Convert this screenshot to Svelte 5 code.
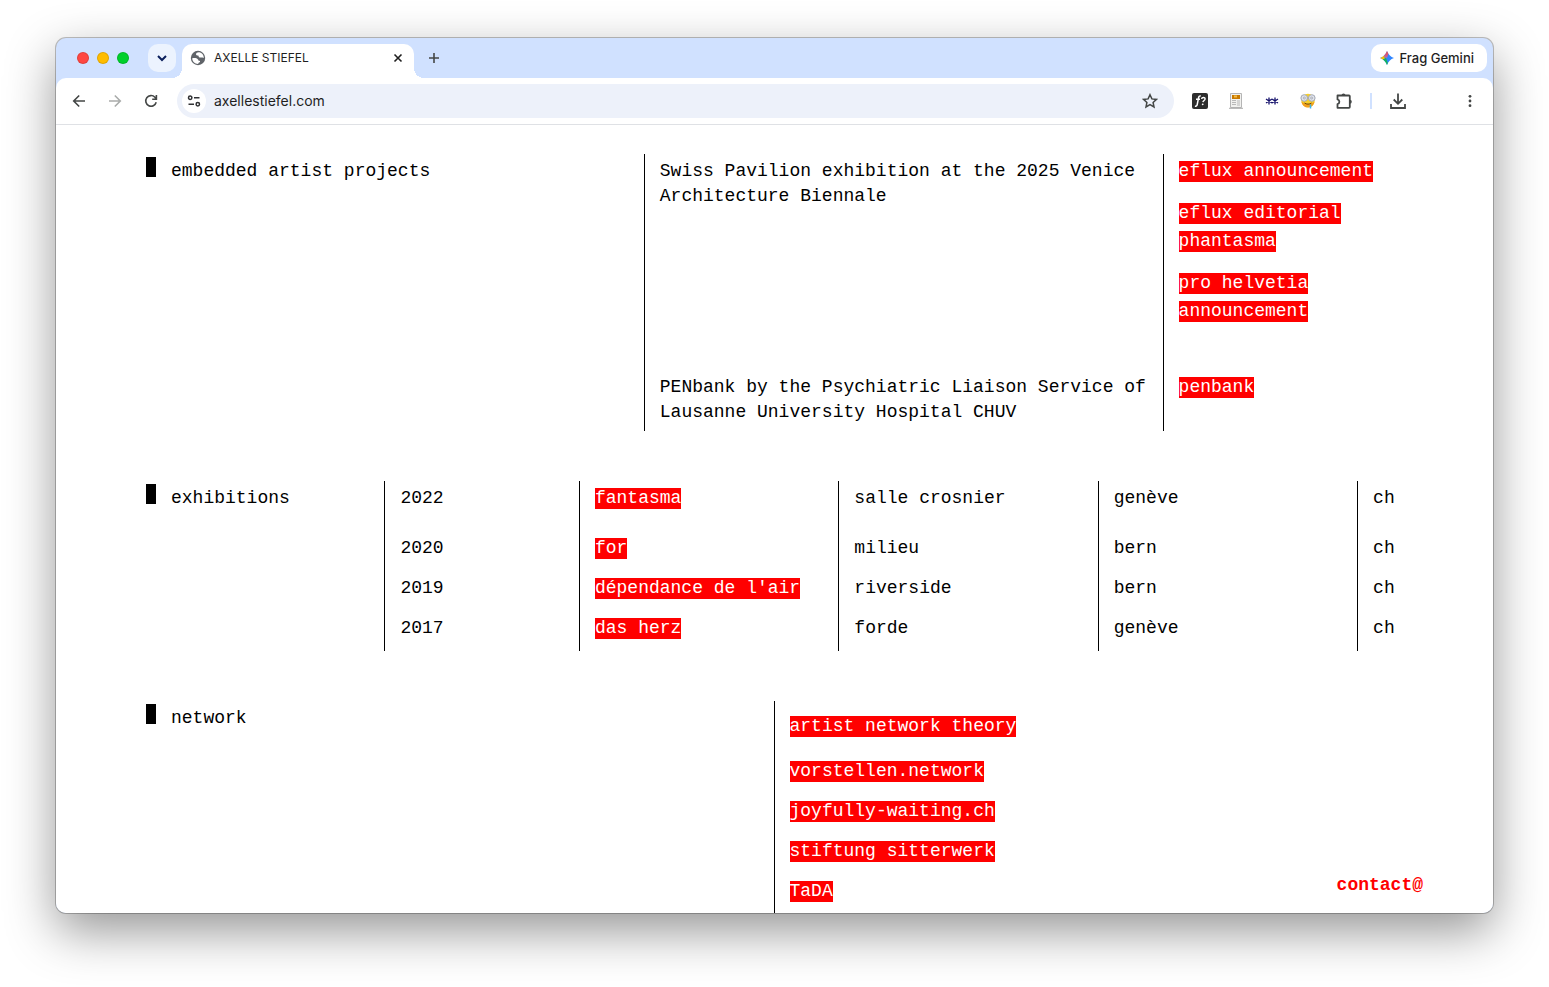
<script lang="ts">
    const announcements = ['eflux announcement', 'eflux editorial phantasma', 'pro helvetia announcement'];

    const exhibitions = [
        { year: '2022', title: 'fantasma', venue: 'salle crosnier', city: 'genève', country: 'ch' },
        { year: '2020', title: 'for', venue: 'milieu', city: 'bern', country: 'ch' },
        { year: '2019', title: "dépendance de l'air", venue: 'riverside', city: 'bern', country: 'ch' },
        { year: '2017', title: 'das herz', venue: 'forde', city: 'genève', country: 'ch' }
    ];

    const network = [
        'artist network theory',
        'vorstellen.network',
        'joyfully-waiting.ch',
        'stiftung sitterwerk',
        'TaDA'
    ];

    let address = 'axellestiefel.com';
</script>

<div class="desktop">
    <div class="window">
        <header class="tab-strip">
            <div class="lights">
                <span class="light light--close"></span>
                <span class="light light--minimise"></span>
                <span class="light light--zoom"></span>
            </div>
            <button class="tab-search" aria-label="Search tabs">
                <svg width="12" height="12" viewBox="0 0 12 12"><path d="M2 4l4 4 4-4" fill="none" stroke="#0b1f5c" stroke-width="2"/></svg>
            </button>
            <div class="tab">
                <svg width="16" height="16" viewBox="0 0 16 16">
                    <circle cx="8" cy="8" r="7.2" fill="#5f6368"/>
                    <path d="M9.400 2.200C7.500 2 6 3 6 4.300c0 1 1.200 1.300 2.300 1.200.5 1 .4 1.700 1.400 1.900 1.500.2 2.900-.2 4.100.6.1-2.700-1.700-5.200-4.400-5.800zM2.200 8.200c2.200-.2 4.600-.3 5.800 1.200.5.800.3 1.300 1.500 1.300.8.200.7 1.200.1 1.600-.7.3-1.300.8-1.500 1.600-3.300 0-5.800-2.400-5.900-5.700z" fill="#fff"/>
                </svg>
                <span class="tab-title">AXELLE STIEFEL</span>
                <button class="tab-close" aria-label="Close tab">
                    <svg width="10" height="10" viewBox="0 0 10 10"><path d="M1.500 1.500l7 7m0-7l-7 7" stroke="#1f1f1f" stroke-width="1.600"/></svg>
                </button>
            </div>
            <button class="tab-new" aria-label="New tab">
                <svg width="12" height="12" viewBox="0 0 12 12"><path d="M6 1v10M1 6h10" stroke="#444746" stroke-width="1.600"/></svg>
            </button>
            <button class="gemini">
                <svg width="14" height="14" viewBox="0 0 14 14">
                    <defs>
                        <clipPath id="spark"><path d="M7 0c1 3.300 3.700 6 7 7-3.300 1-6 3.700-7 7-1-3.300-3.700-6-7-7 3.300-1 6-3.700 7-7z"/></clipPath>
                        <linearGradient id="spark-top" x1="0" y1="0" x2="0" y2="1"><stop offset="0" stop-color="#f43f3f"/><stop offset="1" stop-color="#b870b0"/></linearGradient>
                    </defs>
                    <g clip-path="url(#spark)">
                        <rect width="14" height="14" fill="#3186ff"/>
                        <path d="M3 0h6.500L7 7 4 6z" fill="url(#spark-top)"/>
                        <path d="M0 3l4 2 1 3-5 3z" fill="#f5bb0c"/>
                        <path d="M3 14l-.5-5.500L6 7l2.500 7z" fill="#12b35c"/>
                    </g>
                </svg>
                <span>Frag Gemini</span>
            </button>
        </header>

        <nav class="toolbar" aria-label="Browser toolbar">
            <button class="tool" aria-label="Back">
                <svg width="16" height="16" viewBox="0 0 16 16"><path d="M14 8H3m5.200-5.500L2.700 8l5.500 5.500" fill="none" stroke="#444746" stroke-width="1.600"/></svg>
            </button>
            <button class="tool" aria-label="Forward" disabled>
                <svg width="16" height="16" viewBox="0 0 16 16"><path d="M2 8h11M7.800 2.500L13.300 8l-5.500 5.500" fill="none" stroke="#aaacab" stroke-width="1.600"/></svg>
            </button>
            <button class="tool" aria-label="Reload">
                <svg width="16" height="16" viewBox="0 0 16 16"><path d="M13.200 9.200a5.300 5.300 0 1 1-1.300-5L13.400 6M13.400 2v4.200H9.200" fill="none" stroke="#444746" stroke-width="1.600"/></svg>
            </button>
            <div class="omnibox">
                <button class="site-info" aria-label="Site information">
                    <svg width="14" height="14" viewBox="0 0 14 14" fill="none" stroke="#303134" stroke-width="1.500">
                        <circle cx="3.200" cy="3.800" r="1.700"/><path d="M7 3.800h5.500M1.500 10.200H7"/><circle cx="10.800" cy="10.200" r="1.700"/>
                    </svg>
                </button>
                <input class="address" aria-label="Address" bind:value={address}>
                <button class="bookmark" aria-label="Bookmark this page">
                    <svg width="16" height="16" viewBox="0 0 16 16"><path d="M8 1.700l1.900 4.200 4.600.5-3.400 3.100.9 4.500-4-2.300L4 14l.9-4.500-3.400-3.100 4.600-.5z" fill="none" stroke="#444746" stroke-width="1.500"/></svg>
                </button>
            </div>
            <button class="tool" aria-label="Font finder">
                <svg width="16" height="16" viewBox="0 0 16 16">
                    <rect width="16" height="16" rx="2" fill="#2d2d2d"/>
                    <path d="M8.800 3.200C7.400 2.500 6.800 3.600 6.500 5L5.200 11.600c-.2 1.200-.9 1.900-2.200 1.400M4 6.300h4" fill="none" stroke="#fff" stroke-width="1.500"/>
                    <path d="M9.600 6c.2-2 3.600-2 3.500 0-.1 1.500-2 1.400-2.200 3.200" fill="none" stroke="#fff" stroke-width="1.400"/>
                    <circle cx="10.700" cy="11.300" r=".9" fill="#fff"/>
                </svg>
            </button>
            <button class="tool" aria-label="Reader">
                <svg width="16" height="16" viewBox="0 0 16 16">
                    <path d="M2.500.5h11v14h-11z" fill="#f1f1ef" stroke="#b5b5b5"/>
                    <path d="M1 15.300h14" stroke="#aaa"/>
                    <path d="M4 2h8v4H4z" fill="#c87900"/><path d="M6 2.500h3v2H6z" fill="#f5bd45"/>
                    <path d="M4 7.500h4M4 9.500h4M4 11.500h4M9 8h3M9 10h3M9 12h3" stroke="#b9b9b9"/>
                </svg>
            </button>
            <button class="tool" aria-label="Password filler">
                <svg width="16" height="16" viewBox="0 0 16 16"><path d="M5 4.500v7M2 6l6 4M2 10l6-4M11 4.500v7M8 6l6 4M8 10l6-4" stroke="#14106b" stroke-width="1.300"/></svg>
            </button>
            <button class="tool" aria-label="Page peek">
                <svg width="16" height="16" viewBox="0 0 16 16">
                    <circle cx="8" cy="7.500" r="6.700" fill="#f7cf2b"/>
                    <path d="M1.500 8.500c2.500 3.300 10.500 3.300 13 0-.5 4-3.500 6-6.500 6s-6-2-6.500-6z" fill="#f2a01c"/>
                    <circle cx="4.200" cy="5" r="3.300" fill="#dfe2ea" stroke="#a3a8b4"/>
                    <circle cx="11.800" cy="5" r="3.300" fill="#dfe2ea" stroke="#a3a8b4"/>
                    <circle cx="4.400" cy="5" r="1" fill="none" stroke="#9b9faa" stroke-width=".7"/>
                    <circle cx="11.600" cy="5" r="1" fill="none" stroke="#9b9faa" stroke-width=".7"/>
                    <path d="M4.500 10c2 1.500 5 1.500 7 0" fill="none" stroke="#70470a"/>
                    <path d="M10.500 11.500v4" stroke="#35b5ed" stroke-width="1.500"/>
                </svg>
            </button>
            <button class="tool" aria-label="Extensions">
                <svg width="18" height="18" viewBox="0 0 18 18"><path d="M2.500 3.500H14a.8.8 0 0 1 .8.8V15a.8.8 0 0 1-.8.8H2.500v-3.600c2.500-.7 2.500-4.100 0-4.800z" fill="none" stroke="#444746" stroke-width="1.800" stroke-linejoin="round"/><path d="M6.500 3.500a2 2 0 0 1 4 0zM14.800 7.800a2 2 0 0 1 0 4z" fill="#444746"/></svg>
            </button>
            <span class="separator"></span>
            <button class="tool" aria-label="Downloads">
                <svg width="18" height="18" viewBox="0 0 18 18"><path d="M9 1.500v10M4.700 7.500L9 11.800l4.300-4.300M2 12v4h14v-4" fill="none" stroke="#444746" stroke-width="1.800"/></svg>
            </button>
            <button class="tool tool--menu" aria-label="Menu">
                <svg width="16" height="16" viewBox="0 0 16 16" fill="#444746"><circle cx="8" cy="3.300" r="1.400"/><circle cx="8" cy="8" r="1.400"/><circle cx="8" cy="12.700" r="1.400"/></svg>
            </button>
        </nav>

        <main class="page">
            <section class="projects">
                <h2>embedded artist projects</h2>
                <p class="project">Swiss Pavilion exhibition at the 2025 Venice Architecture Biennale</p>
                <ul class="project-links project-links--spaced">
                    {#each announcements as name}
                        <li><a href="#top">{name}</a></li>
                    {/each}
                </ul>
                <p class="project project--second">PENbank by the Psychiatric Liaison Service of Lausanne University Hospital CHUV</p>
                <ul class="project-links">
                    <li><a href="#top">penbank</a></li>
                </ul>
            </section>

            <table class="exhibitions">
                <colgroup>
                    <col class="col-wide">
                    <col class="col-year">
                    <col class="col-wide">
                    <col class="col-wide">
                    <col class="col-wide">
                    <col>
                </colgroup>
                <tbody>
                    {#each exhibitions as show, i}
                        <tr>
                            {#if i === 0}
                                <th rowspan={exhibitions.length} scope="rowgroup"><h2>exhibitions</h2></th>
                            {/if}
                            <td>{show.year}</td>
                            <td><a href="#top">{show.title}</a></td>
                            <td>{show.venue}</td>
                            <td>{show.city}</td>
                            <td>{show.country}</td>
                        </tr>
                    {/each}
                </tbody>
            </table>

            <section class="network">
                <h2>network</h2>
                <ul class="network-links">
                    {#each network as name}
                        <li><a href="#top">{name}</a></li>
                    {/each}
                </ul>
            </section>

            <a class="contact" href="#contact">contact@</a>
        </main>
    </div>
</div>

<style>
    :global(body) {
        margin: 0;
        background-color: #FFFFFF;
    }
    .desktop {
        box-sizing: border-box;
        height: 100vh;
        padding: 38px 56px 74px;
        overflow: hidden;
    }
    .window {
        display: flex;
        flex-direction: column;
        height: 100%;
        border-radius: 10px;
        overflow: hidden;
        background-color: #D0E1FF;
        box-shadow: 0 0 0 1px rgba(0, 0, 0, 0.24), 0 18px 50px rgba(0, 0, 0, 0.42);
        font-family: Inter, "Liberation Sans", sans-serif;
        color: #1F1F1F;
    }
    button {
        display: flex;
        align-items: center;
        justify-content: center;
        flex: none;
        padding: 0;
        border: none;
        background: none;
        font-family: inherit;
        color: inherit;
    }
    svg {
        flex: none;
    }

    /* tab strip */
    .tab-strip {
        display: flex;
        align-items: center;
        flex: none;
        height: 40px;
        padding: 0 6px 0 21px;
    }
    .lights {
        display: flex;
        gap: 8px;
        margin-right: 19px;
    }
    .light {
        box-sizing: border-box;
        width: 12px;
        height: 12px;
        border: 1px solid rgba(0, 0, 0, 0.12);
        border-radius: 50%;
    }
    .light--close {
        background-color: #FF4742;
    }
    .light--minimise {
        background-color: #FFBC00;
    }
    .light--zoom {
        background-color: #00D02B;
    }
    .tab-search {
        width: 28px;
        height: 28px;
        border-radius: 10px;
        background-color: #ECF3FE;
    }
    .tab {
        position: relative;
        display: flex;
        align-items: center;
        align-self: flex-end;
        box-sizing: border-box;
        width: 232px;
        height: 34px;
        margin-left: 6px;
        padding: 0 8px 6px;
        border-radius: 10px 10px 0 0;
        background-color: #FFFFFF;
    }
    .tab::before,
    .tab::after {
        content: "";
        position: absolute;
        bottom: 0;
        width: 10px;
        height: 10px;
    }
    .tab::before {
        right: 100%;
        background: radial-gradient(circle at 0 0, transparent 10px, #FFFFFF 10px);
    }
    .tab::after {
        left: 100%;
        background: radial-gradient(circle at 100% 0, transparent 10px, #FFFFFF 10px);
    }
    .tab-title {
        flex: 1;
        margin-left: 8px;
        font-size: 12px;
        line-height: 16px;
    }
    .tab-close {
        width: 16px;
        height: 16px;
    }
    .tab-new {
        width: 28px;
        height: 28px;
        margin-left: 6px;
    }
    .gemini {
        height: 28px;
        gap: 6px;
        margin-left: auto;
        padding: 0 13px 0 9px;
        border-radius: 10px;
        background-color: #FFFFFF;
        font-size: 13px;
        font-weight: 500;
    }

    /* toolbar */
    .toolbar {
        display: flex;
        align-items: center;
        flex: none;
        height: 46px;
        padding: 0 5px;
        border-bottom: 1px solid #DFE1E5;
        border-radius: 10px 10px 0 0;
        background-color: #FFFFFF;
    }
    .tool {
        width: 36px;
        height: 34px;
    }
    .tool--menu {
        margin-left: 36px;
    }
    .omnibox {
        display: flex;
        align-items: center;
        flex: 1;
        height: 34px;
        margin: 0 8px;
        padding: 0 6px 0 5px;
        border-radius: 17px;
        background-color: #EDF1FA;
    }
    .site-info {
        width: 24px;
        height: 24px;
        border-radius: 50%;
        background-color: #FFFFFF;
    }
    .address {
        flex: 1;
        min-width: 0;
        margin-left: 8px;
        padding: 0;
        border: none;
        outline: 0;
        background: none;
        font-family: inherit;
        font-size: 14px;
        line-height: 20px;
        color: inherit;
    }
    .bookmark {
        width: 36px;
        height: 34px;
    }
    .separator {
        width: 2px;
        height: 16px;
        margin: 0 8px;
        background-color: #D0E1FF;
    }

    /* web page */
    .page {
        position: relative;
        display: flex;
        flex-direction: column;
        flex: 1;
        gap: 50px;
        min-height: 0;
        padding: 29px 71px 0 69px;
        overflow: hidden;
        background-color: #FFFFFF;
        font-family: "MS Mincho", "Liberation Mono", monospace;
        font-size: 18px;
        line-height: 25px;
        color: #000000;
    }
    .page a {
        padding-bottom: 1px;
        background-color: #FF0000;
        color: #FFFFFF;
        text-decoration: none;
    }
    h2 {
        display: flex;
        gap: 15px;
        margin: 0;
        padding: 3px 0 0 21px;
        font-size: 18px;
        font-weight: 400;
        line-height: 29px;
    }
    h2::before {
        content: "";
        width: 10px;
        height: 20px;
        background-color: #000000;
    }
    ul {
        margin: 0;
        padding: 0;
        list-style: none;
    }
    .projects {
        display: grid;
        grid-template-columns: 2fr 2fr 1fr;
        flex: none;
    }
    .project,
    .project-links {
        margin: 0;
        padding-left: 15px;
        border-left: 1px solid #000000;
    }
    .project {
        padding-top: 5px;
        padding-right: 15px;
    }
    .project--second {
        grid-column: 2;
        padding-bottom: 6px;
    }
    .project-links {
        padding-top: 3px;
        line-height: 28px;
    }
    .project-links--spaced {
        padding-bottom: 31px;
    }
    .project-links--spaced li {
        margin-bottom: 14px;
    }
    .exhibitions {
        flex: none;
        width: 100%;
        border-spacing: 0;
        table-layout: fixed;
    }
    .col-wide {
        width: 20%;
    }
    .col-year {
        width: 15%;
    }
    th,
    td {
        padding: 0;
        text-align: left;
        vertical-align: top;
    }
    td {
        padding: 5px 0 10px 15px;
        border-left: 1px solid #000000;
    }
    tr:first-child td {
        padding-bottom: 20px;
    }
    .network {
        display: grid;
        grid-template-columns: 1fr 1fr;
        flex: none;
    }
    .network-links {
        padding: 13px 0 40px 15px;
        border-left: 1px solid #000000;
    }
    .network-links li {
        margin-bottom: 15px;
    }
    .network-links li:first-child {
        margin-bottom: 20px;
    }
    .page .contact {
        position: absolute;
        right: 70px;
        bottom: 14px;
        background: none;
        font-weight: 700;
        color: #FF0000;
    }
</style>
